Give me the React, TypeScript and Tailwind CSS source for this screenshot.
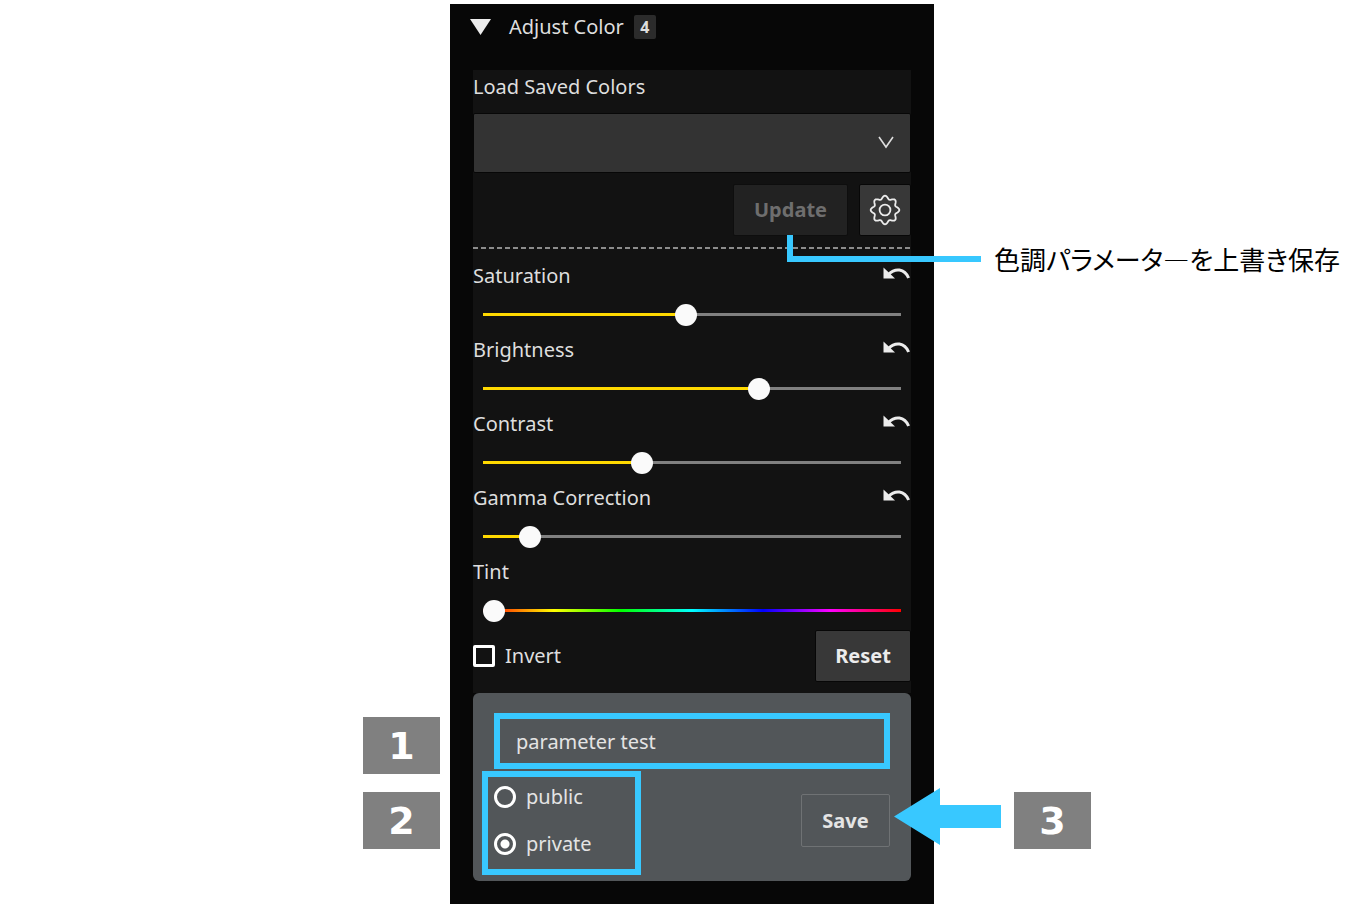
import { useState } from "react";

type SliderProps = {
  id: string;
  label: string;
  initial: number;
  rainbow?: boolean;
};

const RAINBOW =
  "linear-gradient(to right, #ff0000, #ffff00 17%, #00ff00 33%, #00ffff 50%, #0000ff 67%, #ff00ff 83%, #ff0000)";

const sliders: SliderProps[] = [
  { id: "saturation", label: "Saturation", initial: 485 },
  { id: "brightness", label: "Brightness", initial: 669 },
  { id: "contrast", label: "Contrast", initial: 374 },
  { id: "gamma", label: "Gamma Correction", initial: 91 },
  { id: "tint", label: "Tint", initial: 0, rainbow: true },
];

// outline of a cog with eight rounded teeth
const gearPoints = Array.from({ length: 128 }, (_, i) => {
  const angle = (i / 128) * Math.PI * 2;
  const radius = 12.7 + 1.6 * Math.cos(angle * 8);
  const x = 16 + radius * Math.cos(angle);
  const y = 16 + radius * Math.sin(angle);
  return `${x.toFixed(2)},${y.toFixed(2)}`;
}).join(" ");

const GearIcon = () => (
  <svg
    width="32"
    height="32"
    viewBox="0 0 32 32"
    fill="none"
    stroke="currentColor"
    strokeWidth="1.8"
    strokeLinejoin="round"
    aria-hidden="true"
  >
    <polygon points={gearPoints} />
    <circle cx="16" cy="16" r="5.4" />
  </svg>
);

const UndoIcon = () => (
  <svg width="28" height="14" viewBox="0 0 28 14" aria-hidden="true">
    <path d="M0.5 0.5V11.5H12L8.4 8Z" fill="#ececec" />
    <path
      d="M5.5 7.5C12 0.6 21.5 1.2 25.6 11"
      fill="none"
      stroke="#ececec"
      strokeWidth="3"
    />
  </svg>
);

const ColorSlider = ({ id, label, initial, rainbow }: SliderProps) => {
  const [value, setValue] = useState(initial);
  const percent = value / 10;
  const background = rainbow
    ? RAINBOW
    : `linear-gradient(to right, #ffd900 ${percent}%, #808080 ${percent}%)`;
  return (
    <div className="pb-[6px]">
      <div className="flex h-[38px] items-center justify-between">
        <label htmlFor={id}>{label}</label>
        {!rainbow && (
          <button
            type="button"
            aria-label={`Reset ${label}`}
            className="pb-1"
            onClick={() => setValue(initial)}
          >
            <UndoIcon />
          </button>
        )}
      </div>
      <div className="mt-2 px-[10px]">
        <input
          id={id}
          type="range"
          min={0}
          max={1000}
          value={value}
          onChange={(e) => setValue(Number(e.target.value))}
          style={{ "--track": background } as React.CSSProperties}
          className="block h-[22px] w-full appearance-none bg-transparent [&::-webkit-slider-runnable-track]:h-[3px] [&::-webkit-slider-runnable-track]:[background:var(--track)] [&::-webkit-slider-thumb]:-mt-[9px] [&::-webkit-slider-thumb]:size-[22px] [&::-webkit-slider-thumb]:appearance-none [&::-webkit-slider-thumb]:rounded-full [&::-webkit-slider-thumb]:bg-[#fafafa]"
        />
      </div>
    </div>
  );
};

const StepBadge = ({ step }: { step: number }) => (
  <div className="flex h-[57px] w-[77px] items-center justify-center bg-[#808080] font-['DejaVu_Sans',sans-serif] text-[38px] font-bold text-white">
    {step}
  </div>
);

const App = () => {
  const [invert, setInvert] = useState(false);
  const [name, setName] = useState("parameter test");
  const [scope, setScope] = useState("private");

  return (
    <div className="grid min-h-screen grid-cols-[450fr_484px_428fr] bg-white pt-1 pb-[7px] font-['Noto_Sans',sans-serif] text-[20px] leading-[22px] text-[#dedede]">
      <div className="flex min-w-0 flex-col items-end justify-end gap-[18px] pr-[10px] pb-[55px]">
        <StepBadge step={1} />
        <StepBadge step={2} />
      </div>

      <section className="bg-[#070707] pb-[23px]">
        <button type="button" className="flex h-[46px] items-center pl-5">
          <svg width="21" height="16" viewBox="0 0 21 16" aria-hidden="true">
            <path d="M0 0H21L10.5 16Z" fill="#ececec" />
          </svg>
          <span className="ml-[18px]">Adjust Color</span>
          <span className="ml-[10px] flex h-6 w-[22px] items-center justify-center rounded-[2px] bg-[#2b2b2b] text-[16px] font-bold">
            4
          </span>
        </button>

        <div className="mx-[23px] mt-5 bg-[#121212]">
          <label htmlFor="saved" className="flex h-[34px] items-center">
            Load Saved Colors
          </label>
          <div className="relative mt-[9px]">
            <select
              id="saved"
              className="block h-[60px] w-full appearance-none rounded-[2px] border border-[#070707] bg-[#333333] px-4"
            >
              <option value=""></option>
            </select>
            <svg
              width="16"
              height="13"
              viewBox="0 0 16 13"
              className="pointer-events-none absolute top-[23px] right-[17px]"
              aria-hidden="true"
            >
              <path
                d="M1 1L8 11L15 1"
                fill="none"
                stroke="#dedede"
                strokeWidth="1.6"
              />
            </svg>
          </div>

          <div className="mt-[11px] flex justify-end gap-[11px]">
            <div className="relative">
              <button
                type="button"
                disabled
                className="h-[52px] w-[115px] rounded-[2px] border border-[#0e0e0e] bg-[#222222] font-bold text-[#6e6e6e]"
              >
                Update
              </button>
              {/* callout line out to the note */}
              <div className="absolute top-[51px] left-[54px] h-[27px] w-[194px] border-b-6 border-l-6 border-[#38c8ff]" />
            </div>
            <button
              type="button"
              aria-label="Settings"
              className="flex size-[52px] items-center justify-center rounded-[2px] border border-[#070707] bg-[#383838] text-[#ececec]"
            >
              <GearIcon />
            </button>
          </div>

          <div className="mt-[11px] h-[2px] bg-[repeating-linear-gradient(90deg,#8c8c8c_0_5px,transparent_5px_8px)]" />

          <div className="pt-2">
            {sliders.map((slider) => (
              <ColorSlider key={slider.id} {...slider} />
            ))}
          </div>

          <div className="mt-[3px] flex items-center justify-between pb-[11px]">
            <label className="flex items-center gap-[10px]">
              <input
                type="checkbox"
                checked={invert}
                onChange={(e) => setInvert(e.target.checked)}
                className="size-[22px] appearance-none rounded-[2px] border-3 border-white checked:bg-[#ffd900]"
              />
              Invert
            </label>
            <button
              type="button"
              className="h-[52px] w-[96px] rounded-[2px] border border-[#070707] bg-[#383838] font-bold text-[#ececec]"
            >
              Reset
            </button>
          </div>
        </div>

        <form
          className="mx-[23px] rounded-[6px] bg-[#525659] px-[21px] pt-5 pb-[6px] text-[#e4e4e4]"
          onSubmit={(e) => e.preventDefault()}
        >
          <input
            type="text"
            aria-label="Parameter name"
            value={name}
            onChange={(e) => setName(e.target.value)}
            className="block h-[56px] w-full border-6 border-[#38c8ff] bg-transparent px-4 outline-none"
          />
          <div className="mt-[2px] flex items-start justify-between">
            <fieldset className="-ml-3 flex h-[104px] w-[159px] flex-col gap-[25px] border-6 border-[#38c8ff] pt-[9px] pl-[6px]">
              {["public", "private"].map((option) => (
                <label key={option} className="flex items-center gap-[10px]">
                  <input
                    type="radio"
                    name="scope"
                    value={option}
                    checked={scope === option}
                    onChange={() => setScope(option)}
                    className="size-[22px] appearance-none rounded-full border-3 border-white checked:bg-[radial-gradient(circle,#ffffff_4px,transparent_5px)]"
                  />
                  {option}
                </label>
              ))}
            </fieldset>
            <div className="relative mt-[23px]">
              <button
                type="submit"
                className="h-[53px] w-[89px] rounded-[2px] border border-[#6f7274] font-bold"
              >
                Save
              </button>
              <svg
                width="107"
                height="57"
                viewBox="0 0 107 57"
                className="absolute -top-[6px] left-[93px]"
                aria-hidden="true"
              >
                <path d="M0 28.5L46 0V17H107V40H46V57Z" fill="#38c8ff" />
              </svg>
            </div>
          </div>
        </form>
      </section>

      <div className="flex min-w-0 flex-col justify-between pt-[239px] pb-[55px]">
        <p className="pl-[60px] font-['Noto_Sans_CJK_JP',sans-serif] text-[26px] leading-8 whitespace-nowrap text-black [font-feature-settings:'palt']">
          色調パラメータ―を上書き保存
        </p>
        <div className="pl-[80px]">
          <StepBadge step={3} />
        </div>
      </div>
    </div>
  );
};

export default App;
